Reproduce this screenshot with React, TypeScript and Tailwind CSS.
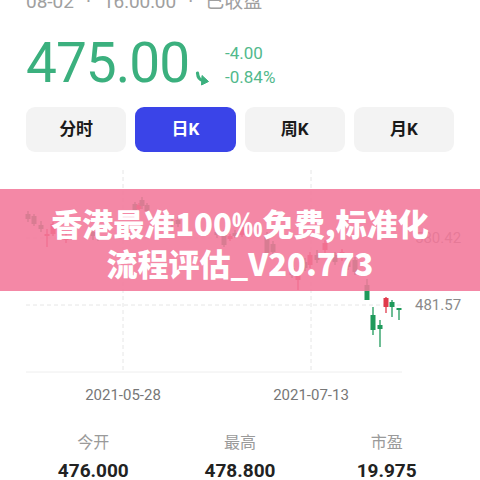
import React from 'react';

type Candle = [number, number, number, number, number, 'r' | 'g'];

// x, bodyTop, bodyBottom, wickTop, wickBottom, colour (page coordinates)
const candles: Candle[] = [
  [28, 214, 219, 211, 222, 'g'],
  [34, 216, 224, 214, 226, 'g'],
  [41, 225, 229, 221, 232, 'g'],
  [47, 234, 236, 229, 247, 'r'],
  [53, 224, 234, 222, 236, 'r'],
  [60, 234, 238, 232, 240, 'g'],
  [66, 236, 240, 234, 243, 'r'],
  [93, 232, 236, 229, 240, 'g'],
  [98, 236, 238, 233, 241, 'g'],
  [135, 204, 210, 202, 212, 'g'],
  [139, 205, 209, 203, 211, 'r'],
  [142, 200, 206, 197, 209, 'g'],
  [147, 205, 211, 203, 213, 'g'],
  [172, 221, 225, 218, 227, 'g'],
  [178, 220, 224, 217, 227, 'g'],
  [217, 232, 235, 229, 238, 'g'],
  [224, 233, 245, 230, 247, 'g'],
  [230, 236, 239, 234, 241, 'r'],
  [235, 233, 236, 230, 238, 'g'],
  [242, 227, 235, 224, 237, 'r'],
  [267, 235, 253, 232, 255, 'g'],
  [273, 244, 252, 241, 254, 'g'],
  [292, 268, 275, 265, 278, 'g'],
  [298, 276, 280, 273, 290, 'r'],
  [305, 262, 268, 258, 271, 'g'],
  [310, 255, 265, 252, 268, 'r'],
  [317, 255, 260, 250, 263, 'g'],
  [325, 243, 250, 240, 253, 'r'],
  [335, 255, 262, 252, 265, 'g'],
  [342, 252, 258, 249, 261, 'r'],
  [348, 257, 267, 254, 270, 'g'],
  [355, 260, 272, 257, 275, 'g'],
  [367, 285, 300, 279, 300, 'g'],
  [373, 315, 330, 307, 335, 'g'],
  [380, 325, 329, 320, 347, 'g'],
  [386, 298, 307, 297, 313, 'r'],
  [392, 302, 307, 300, 317, 'g'],
  [399, 308, 310, 308, 320, 'g'],
];

function DownArrow() {
  return (
    <svg width="14" height="15" viewBox="0 0 14 15" className="mb-[4px]">
      <path d="M2.5 2 C2.8 6.5 4.5 9 8 9.5" fill="none" stroke="#3bb07e" strokeWidth="3.2" strokeLinecap="round" />
      <path d="M7 4.5 L13.5 10.5 L6.5 14 Z" fill="#3bb07e" strokeLinejoin="round" stroke="#3bb07e" strokeWidth="1" />
    </svg>
  );
}

function Chart() {
  return (
    <div className="relative h-[260px]">
      <svg width="480" height="260" viewBox="0 152 480 260" className="absolute left-0 top-0">
        <line x1="123" y1="170" x2="123" y2="372" stroke="#e6e6e6" strokeDasharray="4 3" />
        <line x1="311" y1="170" x2="311" y2="372" stroke="#e6e6e6" strokeDasharray="4 3" />
        <line x1="26" y1="238" x2="402" y2="238" stroke="#e6e6e6" strokeDasharray="4 3" />
        <line x1="26" y1="305" x2="402" y2="305" stroke="#e6e6e6" strokeDasharray="4 3" />
        <line x1="26" y1="372" x2="402" y2="372" stroke="#eeeeee" />
        {candles.map(([x, bt, bb, wt, wb, c], i) => {
          const col = c === 'r' ? '#e03a4b' : '#1f9a5b';
          return (
            <g key={i}>
              <line x1={x} y1={wt} x2={x} y2={wb} stroke={col} strokeWidth="1.3" />
              <rect x={x - 2.5} y={bt} width="5" height={Math.max(bb - bt, 1.5)} fill={col} />
            </g>
          );
        })}
      </svg>
      <div className="absolute left-[415px] top-[76px] text-[15px] leading-[20px] text-[#8a8a8a]">580.42</div>
      <div className="absolute left-[415px] top-[143px] text-[15px] leading-[20px] text-[#8a8a8a]">481.57</div>
      <div className="absolute left-[73px] top-[233px] w-[100px] text-center text-[15px] leading-[20px] text-[#777]">2021-05-28</div>
      <div className="absolute left-[261px] top-[233px] w-[100px] text-center text-[15px] leading-[20px] text-[#777]">2021-07-13</div>
    </div>
  );
}

const tabs = ['分时', '日K', '周K', '月K'];

const stats = [
  { label: '今开', value: '476.000' },
  { label: '最高', value: '478.800' },
  { label: '市盈', value: '19.975' },
];

export default function App() {
  return (
    <div
      className="relative w-[480px] h-[480px] overflow-hidden bg-white"
      style={{ fontFamily: 'Roboto, "Noto Sans CJK SC", sans-serif' }}
    >
      <div className="px-[26px]">
        <div className="-mt-[10px] flex items-center gap-[12px] text-[19px] leading-[24px] text-[#a0a0a0]">
          <span>08-02</span>
          <span>·</span>
          <span>16:00:00</span>
          <span>·</span>
          <span>已收盘</span>
        </div>

        <div className="mt-[22px] flex items-end">
          <div className="text-[55px] leading-[54px] text-[#3bb07e] tracking-[-1px]">475.00</div>
          <div className="ml-[6px]">
            <DownArrow />
          </div>
          <div className="ml-[16px] mb-[1px] flex flex-col text-[17px] leading-[24px] text-[#52b98c]">
            <span>-4.00</span>
            <span>-0.84%</span>
          </div>
        </div>

        <div className="mt-[17px] grid grid-cols-4 gap-[9px]">
          {tabs.map((t, i) => (
            <div
              key={t}
              className={`h-[45px] rounded-[9px] flex items-center justify-center text-[17px] font-bold ${
                i === 1 ? 'bg-[#3a44e8] text-white' : 'bg-[#f3f3f3] text-[#1a1a1a]'
              }`}
            >
              {t}
            </div>
          ))}
        </div>
      </div>

      <Chart />

      <div className="px-[20px] pt-[19px] grid grid-cols-3">
        {stats.map((s) => (
          <div key={s.label} className="flex flex-col items-center">
            <span className="text-[16px] leading-[24px] text-[#9a9a9a]">{s.label}</span>
            <span className="mt-[2px] text-[19px] leading-[28px] font-bold text-[#222]">{s.value}</span>
          </div>
        ))}
      </div>

      <div
        className="absolute left-0 right-0 top-[189px] h-[102px] bg-[rgba(242,120,154,0.88)] pt-[14px] text-center text-[31px] leading-[40px] font-black text-white"
        style={{ fontFamily: '"Noto Sans CJK SC", sans-serif' }}
      >
        <div>香港最准100‰免费,标准化</div>
        <div>流程评估_V20.773</div>
      </div>
    </div>
  );
}
